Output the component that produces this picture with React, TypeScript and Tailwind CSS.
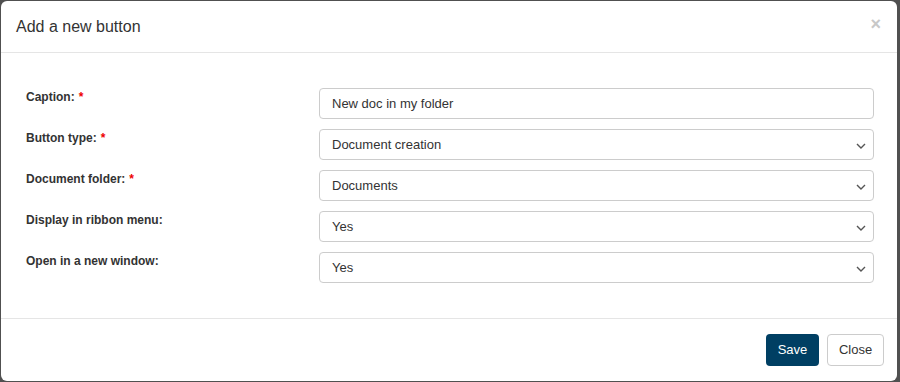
import * as React from "react";

type Row = { label: string; required?: boolean; value: string; kind: "input" | "select" };

const rows: Row[] = [
  { label: "Caption:", required: true, value: "New doc in my folder", kind: "input" },
  { label: "Button type:", required: true, value: "Document creation", kind: "select" },
  { label: "Document folder:", required: true, value: "Documents", kind: "select" },
  { label: "Display in ribbon menu:", value: "Yes", kind: "select" },
  { label: "Open in a new window:", value: "Yes", kind: "select" },
];

function Chevron() {
  return (
    <svg width="10" height="6" viewBox="0 0 10 6" className="absolute right-[7px] top-[13px]">
      <path d="M1 1l4 4 4-4" fill="none" stroke="#555" strokeWidth="1.4" />
    </svg>
  );
}

// Form field: text input or a fake select with a chevron
function Field({ row }: { row: Row }) {
  return (
    <div className="relative h-[31px] flex-1 rounded-[4px] border border-[#cccccc] bg-white px-[12px] flex items-center text-[13px] text-[#333]">
      {row.value}
      {row.kind === "select" && <Chevron />}
    </div>
  );
}

export default function App() {
  return (
    <div
      className="h-[382px] w-[900px] bg-[#505050] pt-[1px] pl-[1px]"
      style={{ fontFamily: '"Liberation Sans", Arial, sans-serif' }}
    >
      <div className="h-[380px] w-[896px] rounded-[6px] bg-white flex flex-col">
        <div className="h-[52px] border-b border-[#e5e5e5] flex items-center justify-between pl-[15px] pr-[16px] shrink-0">
          <div className="text-[16px] text-[#333] mt-[1px]">Add a new button</div>
          <div className="text-[18px] font-bold text-[#c8c8c8] leading-none -mt-[6px]">×</div>
        </div>
        <div className="flex-1 flex flex-col gap-[10px] pt-[35px] pl-[25px] pr-[23px] pb-[35px] border-b border-[#e5e5e5]">
          {rows.map((r) => (
            <div key={r.label} className="flex items-start">
              <div className="w-[293px] pt-0 text-[12px] font-bold text-[#333]">
                {r.label}
                {r.required && <span className="text-[#e00] ml-[4px]">*</span>}
              </div>
              <Field row={r} />
            </div>
          ))}
        </div>
        <div className="h-[62px] flex items-center justify-end gap-[8px] pr-[13px] shrink-0">
          <button className="h-[32px] w-[53px] rounded-[4px] bg-[#003f63] text-white text-[13px]">Save</button>
          <button className="h-[32px] w-[57px] rounded-[4px] border border-[#cccccc] bg-white text-[#333] text-[13px]">
            Close
          </button>
        </div>
      </div>
    </div>
  );
}
